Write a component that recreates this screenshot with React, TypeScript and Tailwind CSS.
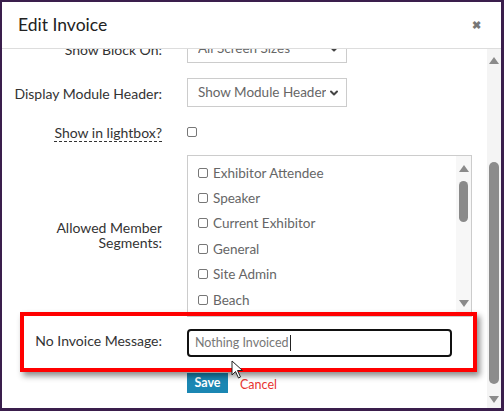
import { ChevronDown } from "lucide-react";

const SEGMENTS = [
  "Exhibitor Attendee",
  "Speaker",
  "Current Exhibitor",
  "General",
  "Site Admin",
  "Beach",
  "Sponsor",
];

function FakeSelect({ value }: { value: string }) {
  return (
    <div className="flex h-[29px] w-[160px] items-center justify-between border border-[#ccc] bg-white pl-[10px] pr-[6px] text-[13.5px] text-[#666]">
      <span className="truncate">{value}</span>
      <ChevronDown className="h-3 w-3 shrink-0 text-[#444]" strokeWidth={4} />
    </div>
  );
}

function Triangle({ up, className }: { up?: boolean; className?: string }) {
  return (
    <svg width="10" height="7" viewBox="0 0 10 7" className={className}>
      <polygon points={up ? "5,0 10,7 0,7" : "0,0 10,0 5,7"} fill="#8a8a8a" />
    </svg>
  );
}

export default function App() {
  return (
    <div
      className="h-[411px] w-[504px] overflow-hidden bg-[#3a1e4c] pb-[3px] pl-[2px] pr-[3px] pt-[2px]"
      style={{ fontFamily: "Lato, 'Noto Sans', sans-serif" }}
    >
      <div className="relative flex h-full flex-col bg-white">
        {/* Header */}
        <div className="flex h-[47px] shrink-0 items-center justify-between border-b border-[#ddd] pl-[16px] pr-[20px]">
          <h2 className="text-[17.5px] text-[#222]">Edit Invoice</h2>
          <span className="text-[11px] font-bold text-[#777]">✖</span>
        </div>

        {/* Body */}
        <div className="flex min-h-0 flex-1">
          <div className="min-h-0 flex-1 overflow-hidden">
            <div className="-mt-[15px] grid grid-cols-[160px_1fr] items-start gap-x-[25px] pr-[15px]">
              {/* Show Block On */}
              <label className="pt-[5px] text-right text-[14px] text-[#333]">Show Block On:</label>
              <FakeSelect value="All Screen Sizes" />

              {/* Display Module Header */}
              <label className="mt-[15px] pt-[5px] text-right text-[14px] text-[#333]">
                Display Module Header:
              </label>
              <div className="mt-[15px]">
                <FakeSelect value="Show Module Header" />
              </div>

              {/* Lightbox */}
              <div className="mt-[13px] text-right">
                <span className="border-b border-dashed border-[#333] text-[14px] leading-[18px] text-[#333]">
                  Show in lightbox?
                </span>
              </div>
              <div className="mt-[20px]">
                <div className="h-[10px] w-[10px] rounded-[2px] border border-[#777] bg-white" />
              </div>

              {/* Allowed Member Segments */}
              <label className="mt-[76px] text-right text-[14px] leading-[15px] text-[#333]">
                Allowed Member
                <br />
                Segments:
              </label>
              <div className="mt-[11px] flex h-[162px] w-[285px] overflow-hidden border border-[#ccc] bg-white">
                <ul className="flex-1 pl-[10px] pt-[4px]">
                  {SEGMENTS.map((s) => (
                    <li key={s} className="flex h-[25.4px] items-center gap-[5px] text-[13.5px] text-[#666]">
                      <span className="h-[10px] w-[10px] shrink-0 rounded-[2px] border border-[#777]" />
                      {s}
                    </li>
                  ))}
                </ul>
                <div className="flex w-[15px] flex-col items-center bg-[#f7f7f7] pt-[9px]">
                  <Triangle up />
                  <div className="mt-[9px] h-[41px] w-[9px] rounded-full bg-[#8a8a8a]" />
                  <Triangle className="mt-auto mb-[9px]" />
                </div>
              </div>

              {/* No Invoice Message */}
              <label className="mt-[13px] text-right text-[14px] text-[#333]">
                No Invoice Message:
              </label>
              <div className="mt-[12px] flex h-[28px] w-[265px] items-center rounded-[4px] border-2 border-[#111] bg-white px-[6px] text-[12.5px] text-[#777]">
                Nothing Invoiced
                <span className="ml-[1px] h-[16px] w-px bg-[#222]" />
              </div>

              {/* Buttons */}
              <div />
              <div className="mt-[16px] flex items-end gap-[12px]">
                <button className="h-[20px] w-[41px] bg-[#1b87b3] text-[12.5px] font-bold text-white">
                  Save
                </button>
                <span className="text-[12.5px] leading-[16px] text-[#e8332f]">Cancel</span>
              </div>
            </div>
          </div>

          {/* Outer scrollbar */}
          <div className="flex w-[14px] shrink-0 flex-col items-center bg-[#f4f4f4] pb-[5px] pt-[8px]">
            <Triangle up />
            <div className="mt-[98px] h-[222px] w-[10px] rounded-full bg-[#8c8c8c]" />
            <Triangle className="mt-auto" />
          </div>
        </div>

        {/* Annotation box */}
        <div className="pointer-events-none absolute left-[18px] top-[310px] h-[60px] w-[457px] border-4 border-[#ff0000] shadow-[3px_4px_6px_rgba(0,0,0,0.45)]" />

        {/* Mouse pointer */}
        <svg
          className="pointer-events-none absolute left-[229px] top-[358px]"
          width="14"
          height="20"
          viewBox="0 0 14 20"
        >
          <path d="M1 1 L1 15 L4.5 11.5 L7.5 18 L9.5 17 L6.5 10.5 L11.5 10.5 Z" fill="white" stroke="#222" strokeWidth="1" strokeLinejoin="round" />
        </svg>
      </div>
    </div>
  );
}
